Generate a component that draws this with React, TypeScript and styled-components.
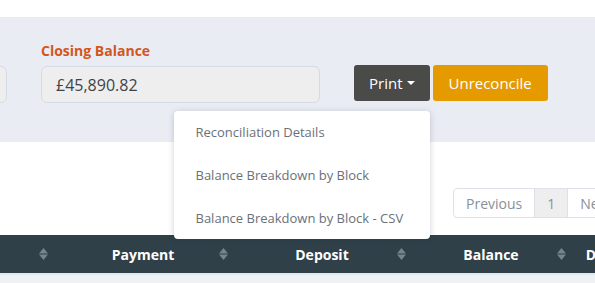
import React from "react";
import styled, { createGlobalStyle } from "styled-components";

const GlobalStyle = createGlobalStyle`
  html, body {
    margin: 0;
    padding: 0;
    overflow: hidden;
    background: #ffffff;
    font-family: "Open Sans", "Liberation Sans", sans-serif;
  }
`;

const Page = styled.div`
  width: 595px;
  overflow: hidden;
`;

const TopStrip = styled.div`
  height: 17px;
  background: #ffffff;
`;

const FilterBand = styled.div`
  height: 125px;
  box-sizing: border-box;
  padding-top: 24px;
  background: #e9ecf3;
`;

const FilterRow = styled.div`
  display: flex;
  align-items: flex-start;
  gap: 34px;
  margin-left: -233px;
`;

const Field = styled.div<{ $width: number }>`
  display: flex;
  flex-direction: column;
  width: ${(p) => p.$width}px;
  flex-shrink: 0;
`;

const Label = styled.label`
  height: 20px;
  line-height: 20px;
  margin-bottom: 5px;
  font-size: 14px;
  font-weight: 700;
  color: #d4561c;
`;

const Input = styled.div`
  height: 37px;
  box-sizing: border-box;
  padding-left: 14px;
  display: flex;
  align-items: center;
  background: #eeeeee;
  border: 1px solid #d3dbe6;
  border-radius: 6px;
  font-size: 16px;
  color: #3d4449;
`;

const Actions = styled.div`
  display: flex;
  gap: 3px;
  margin-top: 24px;
  flex-shrink: 0;
`;

const MenuWrap = styled.div`
  position: relative;
`;

const Button = styled.button<{ $tone: "dark" | "amber" }>`
  height: 36px;
  box-sizing: border-box;
  padding: 0 ${(p) => (p.$tone === "dark" ? "15px" : "16px")};
  display: flex;
  align-items: center;
  gap: 4px;
  border: none;
  border-radius: 3px;
  font-family: inherit;
  font-size: 15px;
  color: #ffffff;
  background: ${(p) => (p.$tone === "dark" ? "#4a4a48" : "#e59a00")};
`;

const Caret = styled.span`
  width: 0;
  height: 0;
  border-left: 4px solid transparent;
  border-right: 4px solid transparent;
  border-top: 4px solid #ffffff;
`;

const Menu = styled.ul`
  position: absolute;
  top: calc(100% + 10px);
  right: 0;
  width: 256px;
  margin: 0;
  padding: 0;
  list-style: none;
  background: #ffffff;
  border-radius: 4px;
  box-shadow: 0 1px 6px rgba(40, 50, 80, 0.22);
  z-index: 5;
`;

const MenuItem = styled.li`
  height: 42.7px;
  display: flex;
  align-items: center;
  padding-left: 22px;
  font-size: 13px;
  color: #6b7079;
`;

const Middle = styled.div`
  height: 93px;
  box-sizing: border-box;
  padding-top: 46px;
  display: flex;
  align-items: flex-start;
  justify-content: flex-end;
  width: 640px;
  padding-right: 16px;
`;

const Pager = styled.div`
  display: flex;
  height: 30px;
  box-sizing: border-box;
  border: 1px solid #dee2e6;
  border-radius: 4px;
`;

const PageCell = styled.div<{ $active?: boolean }>`
  display: flex;
  align-items: center;
  padding: 0 12px;
  font-size: 14px;
  color: #8a9098;
  background: ${(p) => (p.$active ? "#eeeeee" : "transparent")};
  & + & {
    border-left: 1px solid #dee2e6;
  }
`;

const HeaderRow = styled.div`
  display: flex;
  height: 38px;
  background: #2f4048;
  margin-left: -144px;
`;

const HeadCell = styled.div<{ $width: number }>`
  position: relative;
  flex-shrink: 0;
  width: ${(p) => p.$width}px;
  box-sizing: border-box;
  padding-right: 6px;
  display: flex;
  align-items: center;
  justify-content: center;
  font-size: 14px;
  font-weight: 700;
  color: #ffffff;
`;

const SortIcon = styled.svg`
  position: absolute;
  right: 8px;
  top: 13px;
`;

const BodyRow = styled.div`
  height: 10px;
  border-top: 2px solid #e3e8ee;
  background: #eef2f5;
`;

const Sort = () => (
  <SortIcon width="9" height="12" viewBox="0 0 9 12">
    <path d="M4.5 0 L9 5.4 L0 5.4 Z" fill="#76848b" />
    <path d="M0 6.6 L9 6.6 L4.5 12 Z" fill="#76848b" />
  </SortIcon>
);

const columns = [
  { label: "Reference", width: 200 },
  { label: "Payment", width: 180 },
  { label: "Deposit", width: 178 },
  { label: "Balance", width: 160 },
  { label: "Description", width: 110 },
];

export default function App() {
  return (
    <Page>
      <GlobalStyle />
      <TopStrip />
      <FilterBand>
        <FilterRow>
          <Field $width={240}>
            <Label>Opening Balance</Label>
            <Input>£44,210.10</Input>
          </Field>
          <Field $width={279}>
            <Label>Closing Balance</Label>
            <Input>£45,890.82</Input>
          </Field>
          <Actions>
            <MenuWrap>
              <Button $tone="dark">
                Print <Caret />
              </Button>
              <Menu>
                <MenuItem>Reconciliation Details</MenuItem>
                <MenuItem>Balance Breakdown by Block</MenuItem>
                <MenuItem>Balance Breakdown by Block - CSV</MenuItem>
              </Menu>
            </MenuWrap>
            <Button $tone="amber">Unreconcile</Button>
          </Actions>
        </FilterRow>
      </FilterBand>
      <Middle>
        <Pager>
          <PageCell>Previous</PageCell>
          <PageCell $active>1</PageCell>
          <PageCell>Next</PageCell>
        </Pager>
      </Middle>
      <HeaderRow>
        {columns.map((c) => (
          <HeadCell key={c.label} $width={c.width}>
            {c.label}
            <Sort />
          </HeadCell>
        ))}
      </HeaderRow>
      <BodyRow />
    </Page>
  );
}
